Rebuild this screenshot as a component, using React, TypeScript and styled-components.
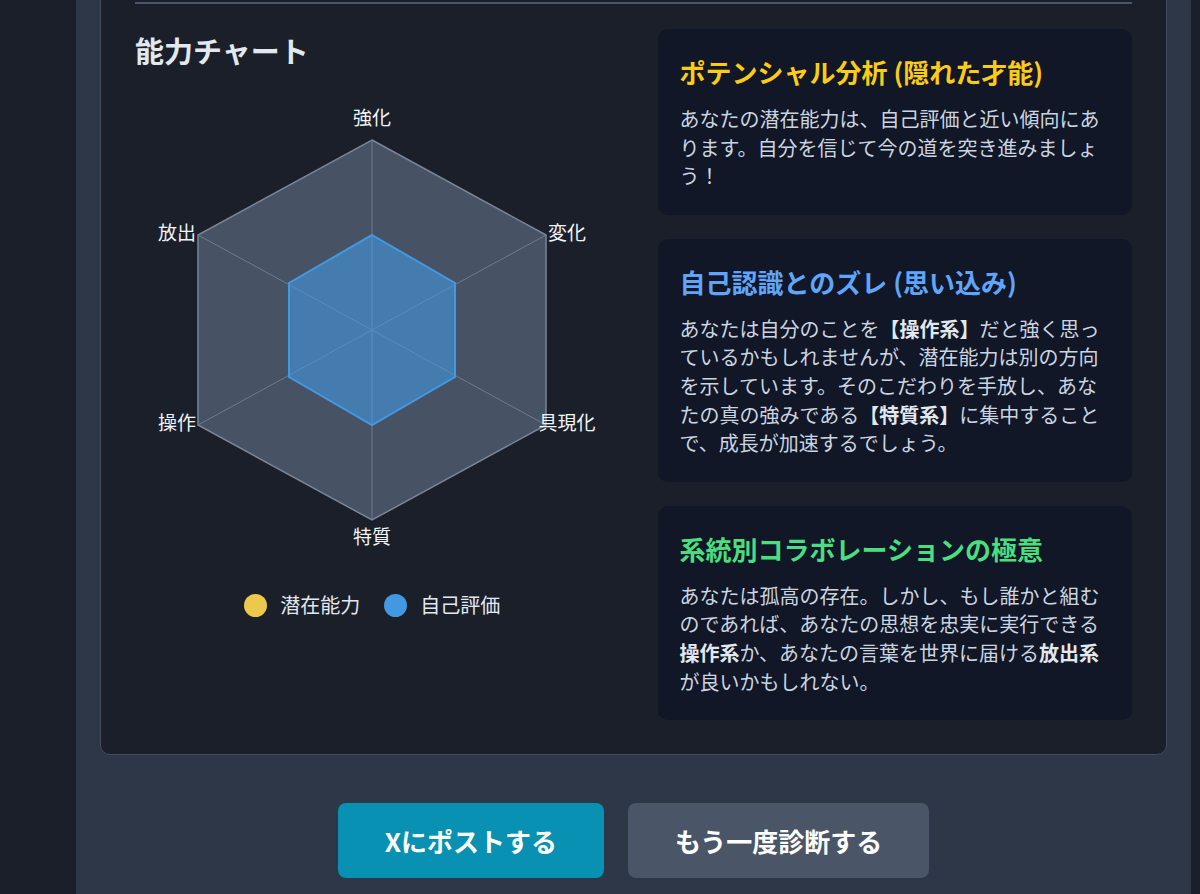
import React from "react";
import styled, { createGlobalStyle } from "styled-components";

const GlobalStyle = createGlobalStyle`
  html, body {
    margin: 0;
    padding: 0;
    background: #1b1f29;
    overflow: hidden;
  }
  body {
    font-family: "Noto Sans CJK JP", "Noto Sans", sans-serif;
    color: #e2e8f0;
  }
`;

const axes = [
  { label: "強化", x: 237, y: 45 },
  { label: "変化", x: 432, y: 160 },
  { label: "具現化", x: 432, y: 350 },
  { label: "特質", x: 237, y: 464 },
  { label: "操作", x: 42, y: 350 },
  { label: "放出", x: 42, y: 160 },
];

const CX = 237;
const CY = 259;
const outer = [
  [0, -190],
  [174, -95],
  [174, 95],
  [0, 190],
  [-174, 95],
  [-174, -95],
];
const selfScore = [
  [0, -95],
  [83, -47],
  [83, 47],
  [0, 95],
  [-83, 47],
  [-83, -47],
];

const toPoints = (pts: number[][]) =>
  pts.map(([x, y]) => `${CX + x},${CY + y}`).join(" ");

const RadarChart = () => {
  return (
    <ChartSvg viewBox="0 0 474 500" width={474} height={500}>
      <polygon
        points={toPoints(outer)}
        fill="#4a5568"
        fillOpacity={0.95}
        stroke="#7a8598"
        strokeWidth={1.5}
      />
      {outer.map(([x, y], i) => (
        <line
          key={i}
          x1={CX}
          y1={CY}
          x2={CX + x}
          y2={CY + y}
          stroke="#6f7a8d"
          strokeWidth={1}
        />
      ))}
      <polygon
        points={toPoints(selfScore)}
        fill="rgba(66, 153, 225, 0.6)"
        stroke="#4299e1"
        strokeWidth={2}
      />
      {axes.map((a) => (
        <AxisLabel key={a.label} x={a.x} y={a.y} textAnchor="middle" dominantBaseline="central">
          {a.label}
        </AxisLabel>
      ))}
    </ChartSvg>
  );
};

const App = () => {
  return (
    <>
      <GlobalStyle />
      <Page>
        <Shell>
          <ResultPanel>
            <Divider />
            <ContentGrid>
              <ChartColumn>
                <ChartHeading>能力チャート</ChartHeading>
                <RadarChart />
                <Legend>
                  <LegendItem>
                    <Dot $color="#ecc94b" />
                    潜在能力
                  </LegendItem>
                  <LegendItem>
                    <Dot $color="#4299e1" />
                    自己評価
                  </LegendItem>
                </Legend>
              </ChartColumn>
              <InsightList>
                <InsightCard>
                  <InsightTitle $color="#facc15">ポテンシャル分析 (隠れた才能)</InsightTitle>
                  <InsightBody>
                    あなたの潜在能力は、自己評価と近い傾向にあります。自分を信じて今の道を突き進みましょう！
                  </InsightBody>
                </InsightCard>
                <InsightCard>
                  <InsightTitle $color="#60a5fa">自己認識とのズレ (思い込み)</InsightTitle>
                  <InsightBody>
                    あなたは自分のことを<Em>【操作系】</Em>だと強く思っているかもしれませんが、潜在能力は別の方向を示しています。そのこだわりを手放し、あなたの真の強みである<Em>【特質系】</Em>に集中することで、成長が加速するでしょう。
                  </InsightBody>
                </InsightCard>
                <InsightCard>
                  <InsightTitle $color="#4ade80">系統別コラボレーションの極意</InsightTitle>
                  <InsightBody>
                    あなたは孤高の存在。しかし、もし誰かと組むのであれば、あなたの思想を忠実に実行できる<Em>操作系</Em>か、あなたの言葉を世界に届ける<Em>放出系</Em>が良いかもしれない。
                  </InsightBody>
                </InsightCard>
              </InsightList>
            </ContentGrid>
          </ResultPanel>
          <Actions>
            <ActionButton $variant="primary">Xにポストする</ActionButton>
            <ActionButton $variant="secondary">もう一度診断する</ActionButton>
          </Actions>
        </Shell>
      </Page>
    </>
  );
};

export default App;

const Page = styled.div`
  display: flex;
  padding: 0 9px 0 76px;
  min-height: 894px;
`;

const Shell = styled.div`
  flex: 1;
  margin-top: -40px;
  padding: 24px 24px 40px;
  background: #2d3748;
  border-radius: 24px;
`;

const ResultPanel = styled.div`
  background: #1b1f2a;
  border: 1px solid #434b5c;
  border-radius: 10px;
  padding: 0 34px 34px;
`;

const Divider = styled.div`
  height: 2px;
  margin-top: 17px;
  background: #4a5568;
`;

const ContentGrid = styled.div`
  display: grid;
  grid-template-columns: 1fr 1fr;
  gap: 48px;
  margin-top: 25px;
  align-items: start;
`;

const ChartColumn = styled.div`
  display: flex;
  flex-direction: column;
  align-items: center;
`;

const ChartHeading = styled.h2`
  align-self: stretch;
  margin: 0;
  font-size: 29px;
  line-height: 42px;
  font-weight: 700;
  color: #e2e8f0;
`;

const ChartSvg = styled.svg`
  display: block;
`;

const AxisLabel = styled.text`
  font-family: "Noto Sans CJK JP", "Noto Sans", sans-serif;
  font-size: 19px;
  fill: #f1f5f9;
`;

const Legend = styled.div`
  display: flex;
  align-items: center;
  gap: 24px;
  margin-top: 22px;
`;

const LegendItem = styled.div`
  display: flex;
  align-items: center;
  gap: 13px;
  font-size: 20px;
  line-height: 24px;
  color: #e2e8f0;
`;

const Dot = styled.span<{ $color: string }>`
  width: 23px;
  height: 23px;
  border-radius: 50%;
  background: ${(p) => p.$color};
`;

const InsightList = styled.div`
  display: flex;
  flex-direction: column;
  gap: 24px;
`;

const InsightCard = styled.div`
  background: #111726;
  border-radius: 10px;
  padding: 24px 23px 24px 22px;
`;

const InsightTitle = styled.h3<{ $color: string }>`
  margin: 0 0 14px;
  font-size: 26px;
  line-height: 38px;
  font-weight: 700;
  color: ${(p) => p.$color};
`;

const InsightBody = styled.p`
  margin: 0;
  font-size: 20px;
  line-height: 28.6px;
  color: #cbd5e0;
`;

const Em = styled.strong`
  font-weight: 700;
  color: #e2e8f0;
`;

const Actions = styled.div`
  display: flex;
  justify-content: center;
  gap: 24px;
  margin-top: 48px;
`;

const ActionButton = styled.button<{ $variant: "primary" | "secondary" }>`
  border: none;
  border-radius: 8px;
  padding: 20px 47px;
  font-family: "Noto Sans CJK JP", "Noto Sans", sans-serif;
  font-size: 26px;
  line-height: 35px;
  font-weight: 700;
  color: #ffffff;
  cursor: pointer;
  background: ${(p) => (p.$variant === "primary" ? "#0891b2" : "#4a5568")};
`;
